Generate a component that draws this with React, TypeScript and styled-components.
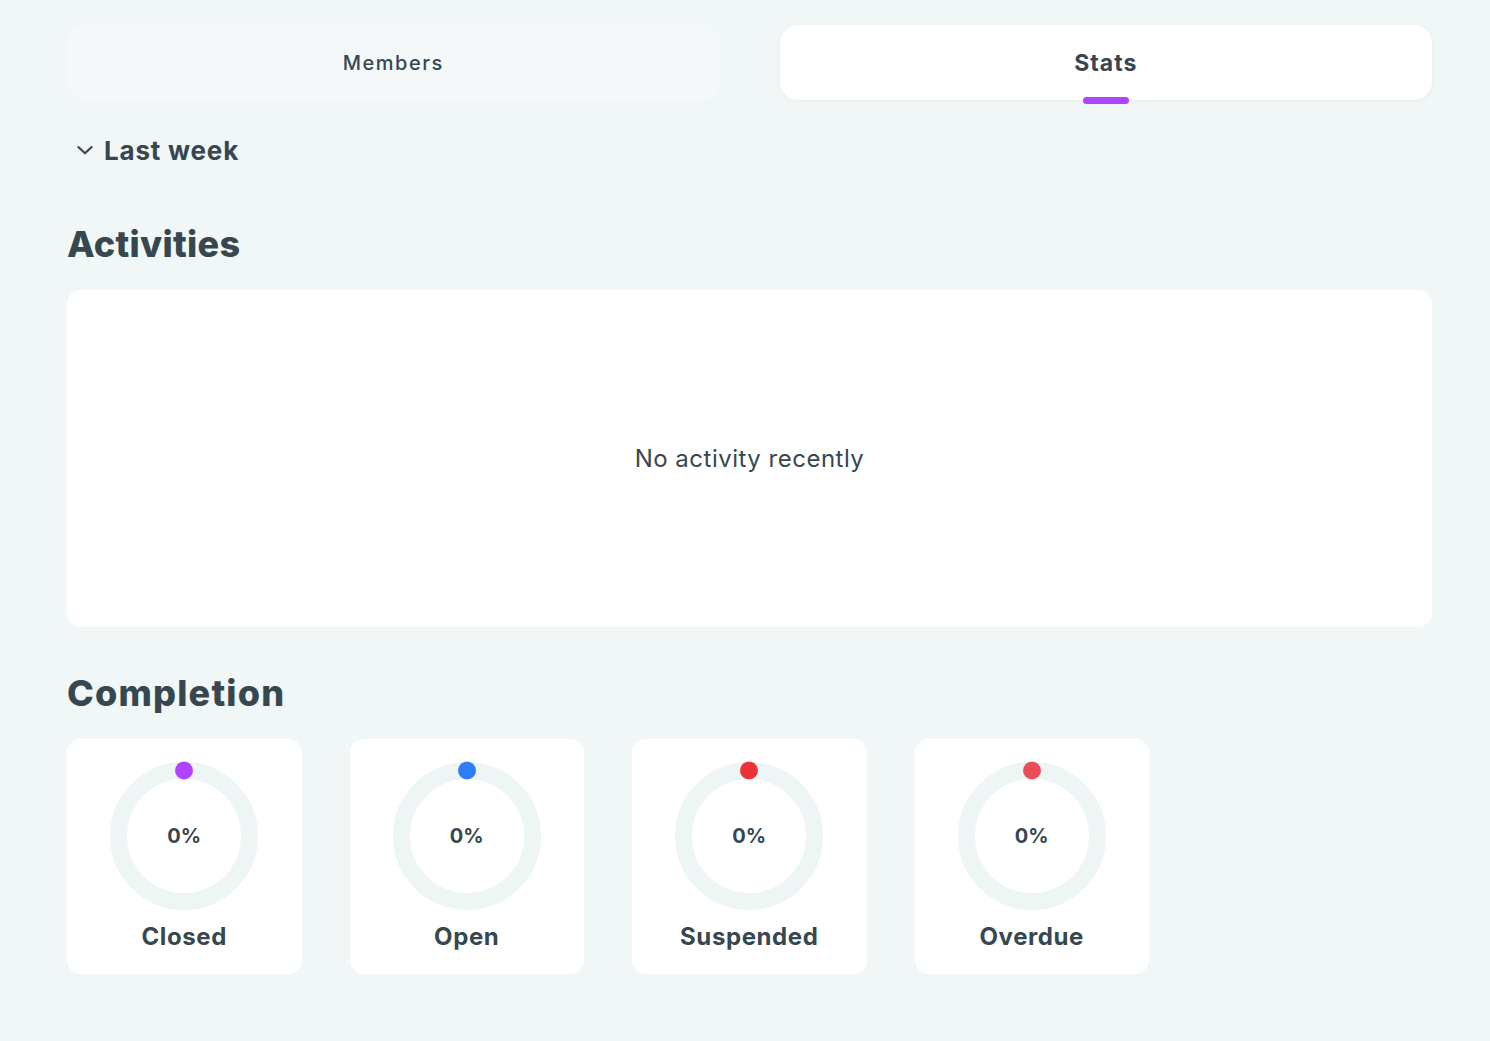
import React from "react";
import styled, { createGlobalStyle } from "styled-components";

const Global = createGlobalStyle`
  html, body { margin: 0; padding: 0; background: #f1f6f6; }
  body { font-family: Inter, "Open Sans", sans-serif; color: #37474f; }
  * { box-sizing: border-box; }
`;

const Page = styled.div`
  padding: 25px 58px 60px 67px;
  display: flex;
  flex-direction: column;
`;

const Tabs = styled.div`
  display: grid;
  grid-template-columns: 1fr 1fr;
  column-gap: 60px;
  height: 75px;
`;

const Tab = styled.div<{ $active?: boolean }>`
  position: relative;
  display: flex;
  align-items: center;
  justify-content: center;
  border-radius: 18px;
  background: ${(p) => (p.$active ? "#ffffff" : "#f4f8f8")};
  box-shadow: ${(p) => (p.$active ? "0 1px 4px rgba(60, 90, 90, 0.06)" : "none")};
  font-size: ${(p) => (p.$active ? "23px" : "20px")};
  letter-spacing: ${(p) => (p.$active ? "1px" : "1.5px")};
  font-weight: ${(p) => (p.$active ? 700 : 500)};
  color: #37474f;
`;

const Indicator = styled.span`
  position: absolute;
  left: 50%;
  bottom: -4px;
  transform: translateX(-50%);
  width: 46px;
  height: 7px;
  border-radius: 4px;
  background: #b043ff;
`;

const Period = styled.div`
  margin-top: 33px;
  display: flex;
  align-items: center;
  gap: 9px;
  padding-left: 8px;
  font-size: 26px;
  font-weight: 700;
  letter-spacing: 0.8px;
  height: 34px;
`;

const Heading = styled.h2<{ $top: number }>`
  margin: ${(p) => p.$top}px 0 0 0;
  font-size: 36px;
  font-weight: 800;
  line-height: 44px;
  letter-spacing: ${(p) => (p.$top > 50 ? "0.3px" : "1.2px")};
  color: #37474f;
`;

const EmptyCard = styled.div`
  margin-top: 24px;
  height: 337px;
  background: #fff;
  border-radius: 14px;
  display: flex;
  align-items: center;
  justify-content: center;
  font-size: 24px;
  font-weight: 400;
  letter-spacing: 0.5px;
  color: #37474f;
`;

const Grid = styled.div`
  margin-top: 24px;
  display: grid;
  grid-template-columns: repeat(4, 234.5px);
  column-gap: 48px;
`;

const StatCard = styled.div`
  height: 235px;
  background: #fff;
  border-radius: 14px;
  display: flex;
  flex-direction: column;
  align-items: center;
  padding-top: 22px;
`;

const Ring = styled.div`
  position: relative;
  width: 150px;
  height: 150px;
  display: flex;
  align-items: center;
  justify-content: center;
`;

const RingSvg = styled.svg`
  position: absolute;
  inset: 0;
`;

const Percent = styled.span`
  position: relative;
  font-size: 20px;
  font-weight: 700;
  color: #37474f;
`;

const Label = styled.div`
  margin-top: 11px;
  font-size: 24px;
  font-weight: 700;
  letter-spacing: 0.6px;
  color: #37474f;
`;

const items = [
  { label: "Closed", color: "#b043ff" },
  { label: "Open", color: "#2e7cf6" },
  { label: "Suspended", color: "#ec3237" },
  { label: "Overdue", color: "#e84e5a" },
];

export default function App() {
  return (
    <>
      <Global />
      <Page>
        <Tabs>
          <Tab>Members</Tab>
          <Tab $active>
            Stats
            <Indicator />
          </Tab>
        </Tabs>
        <Period>
          <svg width="20" height="20" viewBox="0 0 24 24" fill="none" stroke="#37474f" strokeWidth="2.6" strokeLinecap="round" strokeLinejoin="round">
            <path d="M4 8.5l8 7.5 8-7.5" />
          </svg>
          Last week
        </Period>
        <Heading $top={55}>Activities</Heading>
        <EmptyCard>No activity recently</EmptyCard>
        <Heading $top={44}>Completion</Heading>
        <Grid>
          {items.map((it) => (
            <StatCard key={it.label}>
              <Ring>
                <RingSvg width="150" height="150" viewBox="0 0 150 150">
                  <circle cx="75" cy="75" r="65.5" fill="none" stroke="#eef5f5" strokeWidth="17" />
                  <circle cx="75" cy="9.5" r="9" fill={it.color} />
                </RingSvg>
                <Percent>0%</Percent>
              </Ring>
              <Label>{it.label}</Label>
            </StatCard>
          ))}
        </Grid>
      </Page>
    </>
  );
}
